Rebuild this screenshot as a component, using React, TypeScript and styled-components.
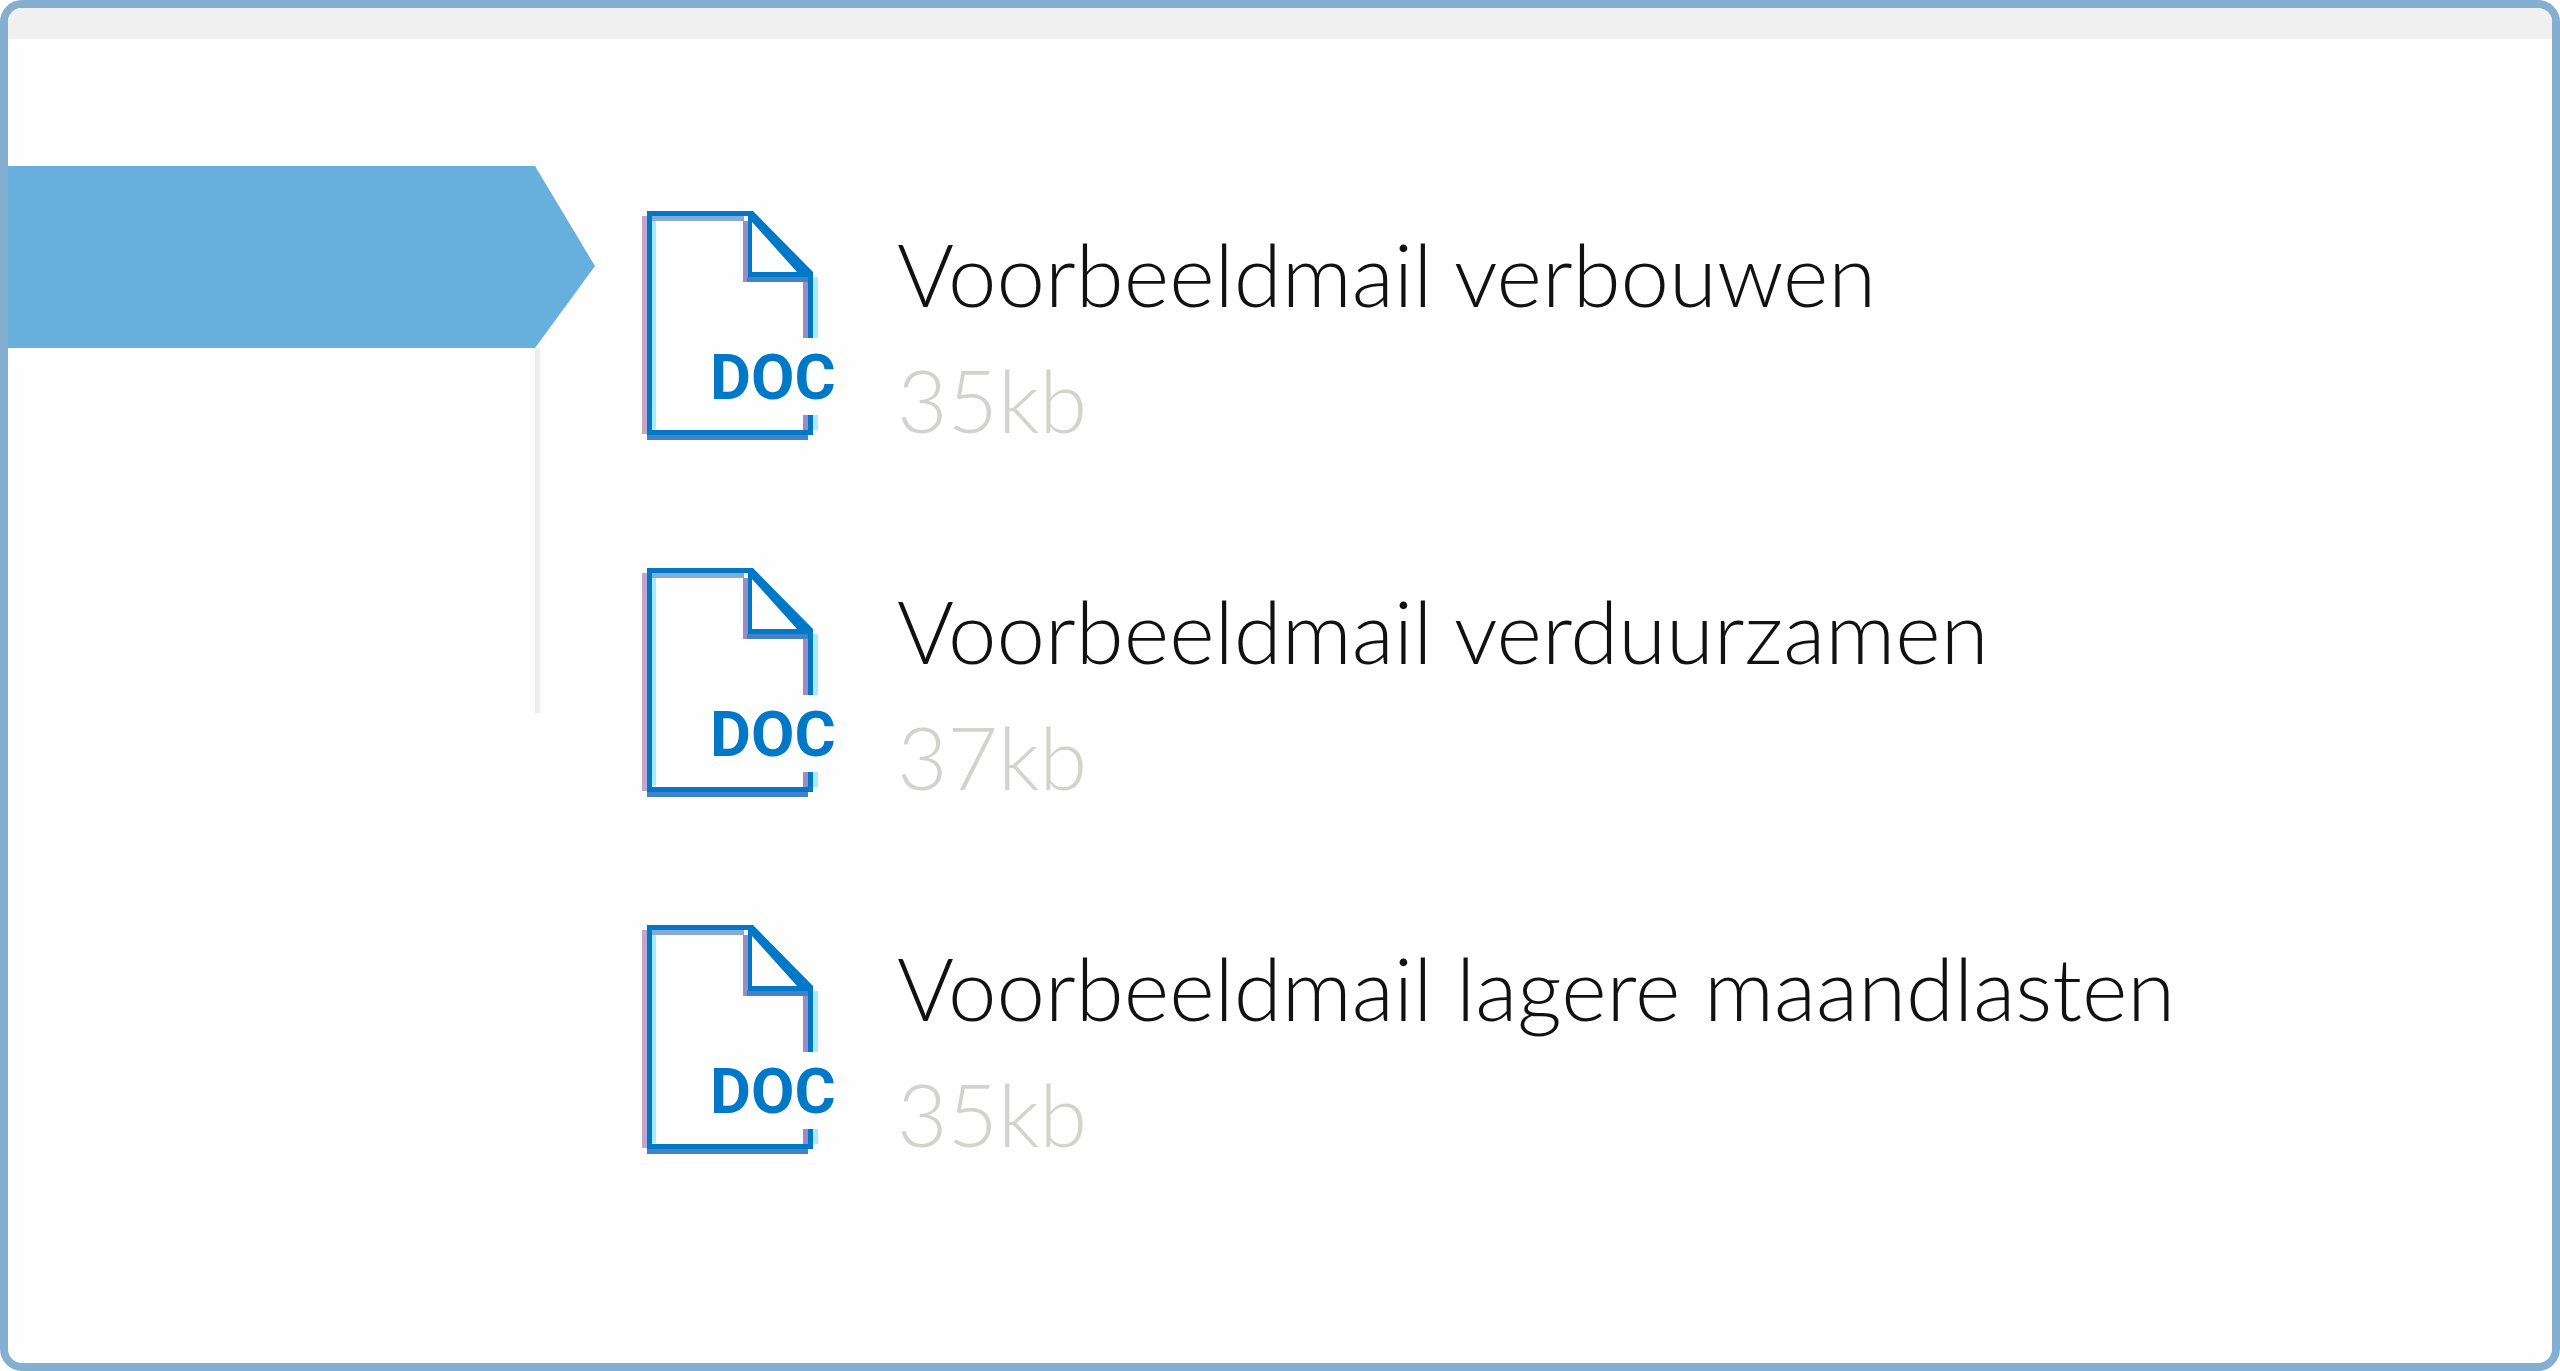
import React from "react";
import styled, { createGlobalStyle } from "styled-components";

const GlobalStyle = createGlobalStyle`
  *, *::before, *::after { box-sizing: border-box; }
  body { margin: 0; background: #ffffff; }
`;

const Frame = styled.div`
  min-height: 100vh;
  border: 8px solid #85afd0;
  border-radius: 22px;
  overflow: hidden;
  background: #fefefe;
  font-family: Lato, "Liberation Sans", sans-serif;
  font-weight: 300;
`;

const TopStrip = styled.div`
  height: 31px;
  background: #f0f0f0;
`;

const Content = styled.div`
  display: flex;
  align-items: flex-start;
  padding-top: 127px;
`;

const Sidebar = styled.nav`
  flex: 0 0 587px;
`;

const ActiveTab = styled.div`
  height: 182px;
  background: #67b0de;
  clip-path: polygon(0 0, 527px 0, 100% 55%, 527px 100%, 0 100%);
`;

const SidebarRest = styled.div`
  width: 532px;
  height: 365px;
  border-right: 5px solid #eeeeee;
`;

const FileList = styled.ul`
  flex: 1;
  display: flex;
  flex-direction: column;
  gap: 105px;
  margin: 0;
  padding: 45px 48px;
  list-style: none;
`;

const FileLink = styled.a`
  display: flex;
  align-items: flex-start;
  gap: 62px;
  color: #111111;
  text-decoration: none;
`;

const Icon = styled.svg`
  flex: none;
  overflow: visible;
`;

const IconLabel = styled.text`
  font-family: Roboto, sans-serif;
  font-size: 63px;
  font-weight: 700;
  fill: #0078c8;
`;

const FileText = styled.span`
  display: flex;
  flex-direction: column;
  font-size: 87px;
  line-height: 126px;
  white-space: nowrap;
`;

const FileSize = styled.span`
  color: #d2d2ce;
`;

function DocIcon() {
  return (
    <Icon width="192" height="229" viewBox="0 0 192 229" aria-hidden="true">
      <path d="M-1 5h5v218h-5z" fill="#c4a5cc" />
      <path d="M100 10h5v61h-5zM160 71h5v56h-5zM160 204h5v15h-5z" fill="#9d8cc4" />
      <path d="M9 10h4v208H9zM170 66h5v61h-5zM170 204h5v15h-5z" fill="#a6ebff" />
      <path d="M9 5h92v5H9z" fill="#86aad9" />
      <path d="M4 224h161v5H4zM104 66h61v5h-61z" fill="#4381c9" />
      <path
        d="M4 0h106l60 61v66h-5V66h-60V5H9v214h156v-15h5v20H4zM109 11v50h45z"
        fill="#0078c8"
        fillRule="evenodd"
      />
      <IconLabel x="67" y="188">DOC</IconLabel>
    </Icon>
  );
}

const files = [
  { name: "Voorbeeldmail verbouwen", size: "35kb" },
  { name: "Voorbeeldmail verduurzamen", size: "37kb" },
  { name: "Voorbeeldmail lagere maandlasten", size: "35kb" },
];

export default function App() {
  return (
    <>
      <GlobalStyle />
      <Frame>
        <TopStrip />
        <Content>
          <Sidebar>
            <ActiveTab />
            <SidebarRest />
          </Sidebar>
          <FileList>
            {files.map((file) => (
              <li key={file.name}>
                <FileLink href="#">
                  <DocIcon />
                  <FileText>
                    <span>{file.name}</span>
                    <FileSize>{file.size}</FileSize>
                  </FileText>
                </FileLink>
              </li>
            ))}
          </FileList>
        </Content>
      </Frame>
    </>
  );
}
